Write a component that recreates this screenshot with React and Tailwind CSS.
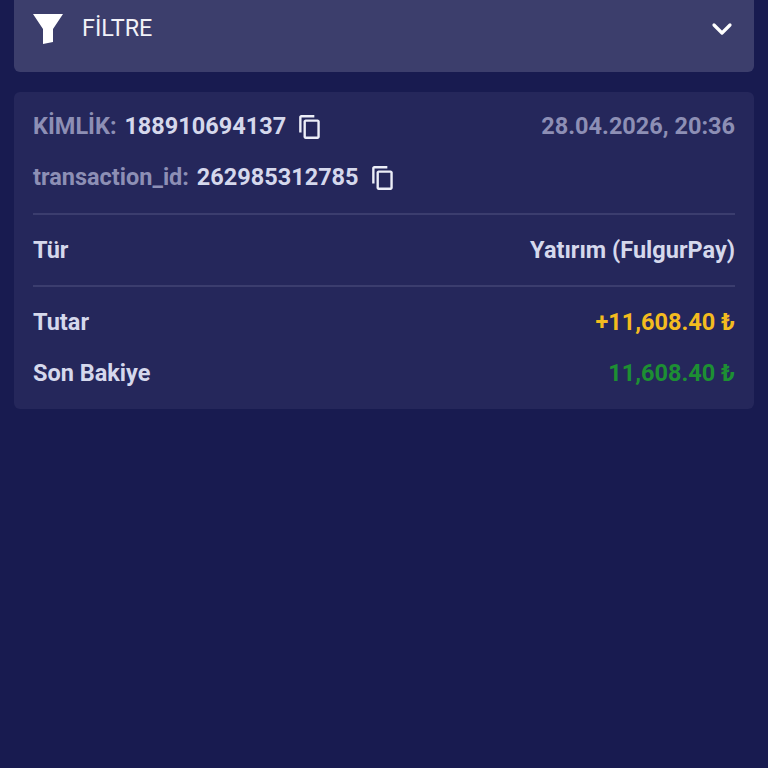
import { ChevronDown } from "lucide-react";

function CopyIcon() {
  return (
    <svg width="26" height="26" viewBox="0 0 24 24" fill="currentColor" className="shrink-0 text-[#eceef8]">
      <path d="M16 1H4c-1.100 0-2 .9-2 2v14h2.200V3.200H16V1zm3 4H8c-1.100 0-2 .9-2 2v14c0 1.100.9 2 2 2h11c1.100 0 2-.9 2-2V7c0-1.100-.9-2-2-2zm-.2 15.800H8.200V7.200h10.600v13.600z" />
    </svg>
  );
}

function Row({ label, value, valueClass }) {
  return (
    <div className="flex h-[51px] items-center justify-between">
      <span className="text-[#d5d8ec]">{label}</span>
      <span className={valueClass}>{value}</span>
    </div>
  );
}

export default function App() {
  return (
    <div
      className="h-[768px] overflow-hidden bg-[#181b50] px-[14px] text-[23.5px] font-bold"
      style={{ fontFamily: "Roboto, sans-serif" }}
    >
      <div className="flex h-[72px] items-center justify-between rounded-b-md bg-[#3c3e6c] pb-[14px] pl-[18px] pr-[16px]">
        <div className="flex items-center gap-[18px]">
          <svg width="32" height="32" viewBox="0 0 32 32" fill="#ffffff">
            <path d="M1 1h30L21 16v13l-10 2V16z" />
          </svg>
          <span className="text-[23.4px] font-normal text-[#f1f2f8]">FİLTRE</span>
        </div>
        <ChevronDown size={32} strokeWidth={2.4} className="text-white" />
      </div>

      <div className="mt-[20px] rounded-md bg-[#25275b] px-[19px] pb-[10px]">
        <div className="flex h-[68px] items-center justify-between pt-[2px]">
          <div className="flex items-center gap-[11px]">
            <span>
              <span className="text-[#8d8fb5]">KİMLİK:</span>{" "}
              <span className="ml-[2px] text-[#d5d8ec]">188910694137</span>
            </span>
            <CopyIcon />
          </div>
          <span className="text-[#8d8fb5]">28.04.2026, 20:36</span>
        </div>

        <div className="flex h-[36px] items-center gap-[11px]">
          <span>
            <span className="text-[#8d8fb5]">transaction_id:</span>{" "}
            <span className="ml-[2px] text-[#d5d8ec]">262985312785</span>
          </span>
          <CopyIcon />
        </div>

        <div className="mt-[17px] h-[2px] bg-[#3b3d6e]" />
        <div className="flex h-[70px] items-center justify-between pt-[1px]">
          <span className="text-[#d5d8ec]">Tür</span>
          <span className="text-[#d5d8ec]">Yatırım (FulgurPay)</span>
        </div>
        <div className="h-[2px] bg-[#3b3d6e]" />

        <div className="pt-[10px]">
          <Row label="Tutar" value="+11,608.40 ₺" valueClass="text-[#f4bb1f]" />
          <Row label="Son Bakiye" value="11,608.40 ₺" valueClass="text-[#1d8f33]" />
        </div>
      </div>
    </div>
  );
}
